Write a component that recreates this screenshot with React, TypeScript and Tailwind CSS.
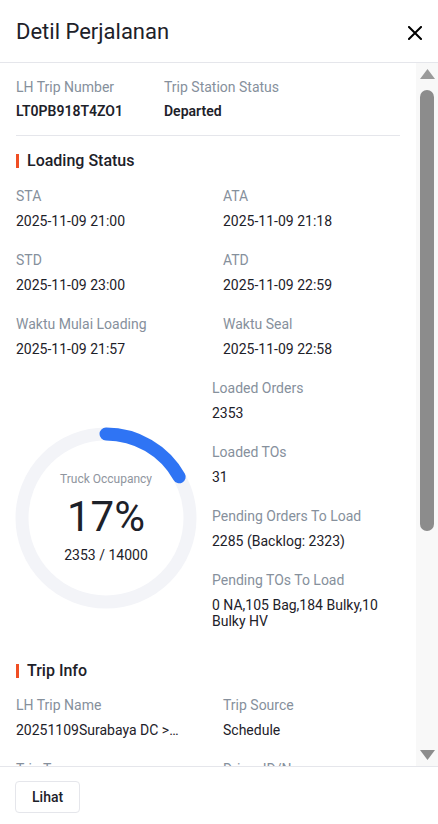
import React from 'react';

const Field: React.FC<{ label: string; value: string; truncate?: boolean }> = ({ label, value, truncate }) => (
  <div className="min-w-0">
    <div className="text-sm leading-5 text-[#86909c]">{label}</div>
    <div className={`mt-[7px] text-sm leading-4 text-[#1d2129] ${truncate ? 'max-w-[163px] truncate' : ''}`}>{value}</div>
  </div>
);

const SectionTitle: React.FC<{ title: string }> = ({ title }) => (
  <div className="flex items-center gap-[8px]">
    <span className="h-[14px] w-[3px] bg-[#f04e23]" />
    <h3 className="text-base font-medium leading-6 text-[#1d2129]">{title}</h3>
  </div>
);

const OccupancyRing: React.FC<{ loaded: number; capacity: number }> = ({ loaded, capacity }) => {
  const pct = Math.round((loaded / capacity) * 100);
  const r = 84;
  const circ = 2 * Math.PI * r;
  const arc = (loaded / capacity) * circ;
  return (
    <div className="relative h-[182px] w-[182px] shrink-0">
      <svg width="182" height="182" viewBox="0 0 182 182">
        <circle cx="91" cy="91" r={r} fill="none" stroke="#f3f4f8" strokeWidth="13" />
        <circle
          cx="91"
          cy="91"
          r={r}
          fill="none"
          stroke="#2f74f4"
          strokeWidth="13"
          strokeLinecap="round"
          strokeDasharray={`${arc} ${circ}`}
          transform="rotate(-90 91 91)"
        />
      </svg>
      <div className="absolute inset-0 flex flex-col items-center justify-center">
        <div className="text-xs leading-4 text-[#8f959e]">Truck Occupancy</div>
        <div className="mt-[6px] text-[42px] leading-[48px] text-[#1d2129]">{pct}%</div>
        <div className="mt-[4px] text-sm leading-5 text-[#1d2129]">
          {loaded} / {capacity}
        </div>
      </div>
    </div>
  );
};

// classic scrollbar drawn beside the scroll area
const ScrollRail: React.FC = () => (
  <div className="flex w-[22px] shrink-0 flex-col items-center bg-[#f8f8f8] pt-[6px] pb-[6px]">
    <svg width="15" height="10" viewBox="0 0 15 10">
      <path d="M7.5 0L15 10H0Z" fill="#9a9a9a" />
    </svg>
    <div className="mt-[11px] h-[441px] w-[14px] rounded-full bg-[#8c8c8c]" />
    <div className="flex-1" />
    <svg width="15" height="10" viewBox="0 0 15 10">
      <path d="M0 0H15L7.5 10Z" fill="#8c8c8c" />
    </svg>
  </div>
);

export default function App() {
  return (
    <div className="flex h-screen flex-col bg-white" style={{ fontFamily: 'Roboto, "Noto Sans", sans-serif' }}>
      {/* header */}
      <div className="flex h-[63px] shrink-0 items-center justify-between border-b border-[#e5e6eb] pl-4 pr-[11px]">
        <h2 className="text-[22px] font-normal text-[#1d2129]">Detil Perjalanan</h2>
        <button className="mt-[3px] flex h-6 w-6 items-center justify-center">
          <svg width="14" height="14" viewBox="0 0 14 14">
            <path d="M1 1L13 13M13 1L1 13" stroke="#000" strokeWidth="2" strokeLinecap="square" />
          </svg>
        </button>
      </div>

      {/* body */}
      <div className="flex min-h-0 flex-1">
        <div className="min-w-0 flex-1 overflow-y-auto [scrollbar-width:none]">
          <div className="px-4 pt-[14px] pb-6">
            <div className="flex">
              <div className="w-[148px]">
                <div className="text-sm leading-5 text-[#86909c]">LH Trip Number</div>
                <div className="mt-1 text-sm font-semibold leading-5 text-[#1d2129]">LT0PB918T4ZO1</div>
              </div>
              <div>
                <div className="text-sm leading-5 text-[#86909c]">Trip Station Status</div>
                <div className="mt-1 text-sm font-semibold leading-5 text-[#1d2129]">Departed</div>
              </div>
            </div>
            <div className="mt-[14px] border-t border-[#e5e6eb]" />

            <div className="mt-[13px]">
              <SectionTitle title="Loading Status" />
              <div className="mt-[13px] grid grid-cols-[207px_1fr] gap-y-[21px]">
                <Field label="STA" value="2025-11-09 21:00" />
                <Field label="ATA" value="2025-11-09 21:18" />
                <Field label="STD" value="2025-11-09 23:00" />
                <Field label="ATD" value="2025-11-09 22:59" />
                <Field label="Waktu Mulai Loading" value="2025-11-09 21:57" />
                <Field label="Waktu Seal" value="2025-11-09 22:58" />
              </div>

              <div className="mt-[21px] flex gap-[15px]">
                <div className="-ml-px mt-[49px]">
                  <OccupancyRing loaded={2353} capacity={14000} />
                </div>
                <div className="flex min-w-0 flex-1 flex-col gap-y-[21px]">
                  <Field label="Loaded Orders" value="2353" />
                  <Field label="Loaded TOs" value="31" />
                  <Field label="Pending Orders To Load" value="2285 (Backlog: 2323)" />
                  <Field label="Pending TOs To Load" value="0 NA,105 Bag,184 Bulky,10 Bulky HV" />
                </div>
              </div>
            </div>

            <div className="mt-[30px]">
              <SectionTitle title="Trip Info" />
              <div className="mt-3 grid grid-cols-[207px_1fr] gap-y-[21px]">
                <Field label="LH Trip Name" value="20251109Surabaya DC > Jakarta Hub" truncate />
                <Field label="Trip Source" value="Schedule" />
                <Field label="Trip Type" value="Line Haul" />
                <Field label="Driver ID/Name" value="1187264 / Budi Santoso" truncate />
                <Field label="Vehicle Number" value="L 9182 UT" />
                <Field label="Vehicle Type" value="Wingbox" />
                <Field label="Origin" value="Surabaya DC" />
                <Field label="Destination" value="Jakarta Hub" />
                <Field label="Created Time" value="2025-11-08 18:30" />
                <Field label="Created By" value="system" />
              </div>
            </div>
          </div>
        </div>
        <ScrollRail />
      </div>

      {/* footer */}
      <div className="flex h-[58px] shrink-0 items-start border-t border-[#e5e6eb] px-[15px] pt-[14px]">
        <button className="h-8 rounded-[4px] border border-[#e5e6eb] bg-white px-4 text-sm font-medium text-[#1d2129]">
          Lihat
        </button>
      </div>
    </div>
  );
}
